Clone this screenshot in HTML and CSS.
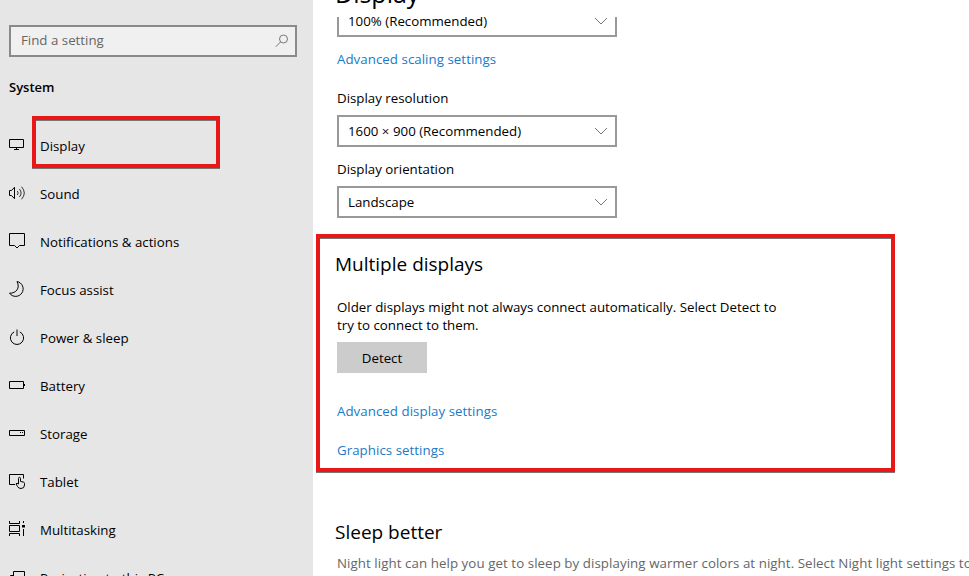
FILE: index.html
```
<!DOCTYPE html>
<html lang="en">
<head>
    <meta charset="UTF-8">
    <meta name="viewport" content="width=device-width, initial-scale=1.0">
    <title>Settings</title>
    <link rel="stylesheet" href="styles.css">
</head>
<body>
    <aside class="sidebar">
        <div class="search">
            <span>Find a setting</span>
            <svg class="search-icon" width="14" height="14" viewBox="0 0 14 14"><circle cx="8.5" cy="5" r="4"/><path d="M5.6 7.8L.8 12.8"/></svg>
        </div>
        <h2 class="sidebar-title">System</h2>
        <nav class="nav">
            <a class="nav-item active">
                <svg class="icon" viewBox="0 0 20 20"><path d="M1.5 3.5h14v8h-14zM8.5 12v1M6 13.5h5"/></svg>
                <span>Display</span>
            </a>
            <a class="nav-item">
                <svg class="icon" viewBox="0 0 20 20"><path d="M1.5 6.5h2L6.5 3.3v11.4L3.5 11.5h-2z"/><path class="soft" d="M9.3 7q1.8 2 0 4M11.4 5q3.4 4 0 8M13.5 2.700q5.600 6.300 0 12.600"/></svg>
                <span>Sound</span>
            </a>
            <a class="nav-item">
                <svg class="icon" viewBox="0 0 20 20"><path d="M1.5 1.5h15v12h-5L9 16l-2.5-2.5h-5z"/></svg>
                <span>Notifications &amp; actions</span>
            </a>
            <a class="nav-item">
                <svg class="icon" viewBox="0 0 20 20"><path d="M9 1.5A7.5 7.5 0 1 1 1.5 13.2C8 13.5 12.5 8 9 1.5z"/></svg>
                <span>Focus assist</span>
            </a>
            <a class="nav-item">
                <svg class="icon" viewBox="0 0 20 20"><path d="M6.2 3.9a6.6 6.6 0 1 0 5.6 0"/><path class="stem" d="M9 1.5V8"/></svg>
                <span>Power &amp; sleep</span>
            </a>
            <a class="nav-item">
                <svg class="icon" viewBox="0 0 20 20"><path d="M1.5 5.5h14v7h-14zM16.5 8v2"/></svg>
                <span>Battery</span>
            </a>
            <a class="nav-item">
                <svg class="icon" viewBox="0 0 20 20"><path d="M1.5 6.5h15v5h-15zM12 8.5h1M14 8.5h1"/></svg>
                <span>Storage</span>
            </a>
            <a class="nav-item">
                <svg class="icon" viewBox="0 0 20 20"><path d="M7 12.5H1.5v-10h14v4"/><path d="M10.5 12V6.5q0-1.2 1-1.2t1 1.2v3l2.8.5q1.2.3 1.2 1.5V13q0 3.500-3.500 3.500-2.500 0-3.500-2l-1.500-2.700q.8-1.300 2.500.2z"/></svg>
                <span>Tablet</span>
            </a>
            <a class="nav-item">
                <svg class="icon" viewBox="0 0 20 20"><path d="M1.5 1v2.5h10V1M1.5 5.5h10v6h-10zM1.5 16v-2.5h10V16M15.5 1v2M15.5 9v7"/><path class="dot" d="M14 5h3v2.500h-3z"/></svg>
                <span>Multitasking</span>
            </a>
            <a class="nav-item">
                <svg class="icon" viewBox="0 0 20 20"><path d="M5.5 3.5h11v9h-11zM5 7.5H2.5v9h10v-4"/></svg>
                <span>Projecting to this PC</span>
            </a>
        </nav>
    </aside>
    <main class="main">
        <header class="page-header"><h1 class="page-title">Display</h1></header>
        <div class="content">
            <div class="select select-scale">
                <span>100% (Recommended)</span>
                <svg class="chevron" viewBox="0 0 14 8"><path d="M1 1l6 6 6-6"/></svg>
            </div>
            <a class="link">Advanced scaling settings</a>
            <div class="label">Display resolution</div>
            <div class="select">
                <span>1600 × 900 (Recommended)</span>
                <svg class="chevron" viewBox="0 0 14 8"><path d="M1 1l6 6 6-6"/></svg>
            </div>
            <div class="label">Display orientation</div>
            <div class="select">
                <span>Landscape</span>
                <svg class="chevron" viewBox="0 0 14 8"><path d="M1 1l6 6 6-6"/></svg>
            </div>
            <section class="multiple">
                <h2 class="heading">Multiple displays</h2>
                <p class="text">Older displays might not always connect automatically. Select Detect to<br>try to connect to them.</p>
                <button class="button" type="button">Detect</button>
                <a class="link">Advanced display settings</a>
                <a class="link">Graphics settings</a>
            </section>
            <section class="sleep">
                <h2 class="heading">Sleep better</h2>
                <p class="hint">Night light can help you get to sleep by displaying warmer colors at night. Select Night light settings to</p>
            </section>
        </div>
    </main>
</body>
</html>
```

FILE: styles.css
```
* {
    box-sizing: border-box;
}
body {
    margin: 0;
    height: 576px;
    display: flex;
    overflow: hidden;
    background-color: #fff;
    color: #000;
    font-family: "Open Sans", "Noto Sans", sans-serif;
    font-size: 13.3px;
    line-height: 18px;
}
h1, h2, p {
    margin: 0;
    font-weight: normal;
}
svg {
    fill: none;
    stroke: #000;
}
.sidebar {
    width: 313px;
    flex: none;
    padding: 25px 16px 0 9px;
    background-color: #e6e6e6;
}
.search {
    height: 32px;
    display: flex;
    align-items: center;
    justify-content: space-between;
    padding: 0 6px 2px 10px;
    border: 2px solid #8a8a8a;
    background-color: #f0f0f0;
    color: #666;
}
.search-icon {
    margin-top: 2px;
    stroke: #777;
}
.sidebar-title {
    margin-top: 21px;
    font-size: 13px;
    font-weight: 600;
}
.nav {
    margin: 26px 0 0 -1px;
}
.nav-item {
    position: relative;
    height: 48px;
    display: flex;
    align-items: center;
    gap: 12px;
    white-space: nowrap;
}
.icon {
    width: 20px;
    height: 20px;
    flex: none;
}
.icon .soft {
    stroke: #333;
}
.icon .stem {
    stroke: #777;
    stroke-width: 2;
}
.icon .dot {
    fill: #000;
    stroke: none;
}
/* red frame over the selected entry */
.nav-item.active::after {
    content: "";
    box-sizing: border-box;
    position: absolute;
    left: 24px;
    top: -6px;
    width: 188px;
    height: 52px;
    border: 4px solid #e81818;
    box-shadow: 0 1px 0 #777, inset 0 1px 0 #777;
}
.main {
    flex: 1;
    min-width: 0;
    display: flex;
    flex-direction: column;
}
.page-header {
    height: 17px;
    flex: none;
    overflow: hidden;
    padding-left: 22px;
}
.page-title {
    margin-top: -25px;
    font-size: 25px;
    line-height: 36px;
}
.content {
    flex: 1;
    overflow: hidden;
    padding-left: 24px;
    white-space: nowrap;
}
.select {
    width: 280px;
    height: 32px;
    display: flex;
    align-items: center;
    justify-content: space-between;
    padding: 0 7px 0 9px;
    border: 2px solid #999;
}
.select-scale {
    margin-top: -12px;
}
.chevron {
    width: 14px;
    height: 8px;
    stroke: #777;
}
.link {
    display: block;
    color: #1a7bc9;
    letter-spacing: 0.04px;
}
.select + .link {
    margin-top: 13px;
}
.link + .label {
    margin-top: 21px;
}
.label {
    margin: 13px 0 8px;
}
.multiple {
    width: 579px;
    height: 238px;
    margin: 16px 0 0 -21px;
    padding: 12px 0 0 17px;
    border: 4px solid #e81818;
    box-shadow: 0 1px 0 #777, inset 0 1px 0 #777;
}
.heading {
    margin-left: -2px;
    font-size: 19px;
    line-height: 28px;
}
.text {
    margin-top: 20px;
}
.button {
    display: block;
    width: 90px;
    height: 31px;
    margin: 8px 0 29px;
    padding: 0;
    border: none;
    background-color: #ccc;
    font: inherit;
}
.link + .link {
    margin-top: 21px;
}
.sleep {
    margin-top: 46px;
}
.hint {
    margin-top: 8px;
    color: #666;
    letter-spacing: 0.07px;
}
```
